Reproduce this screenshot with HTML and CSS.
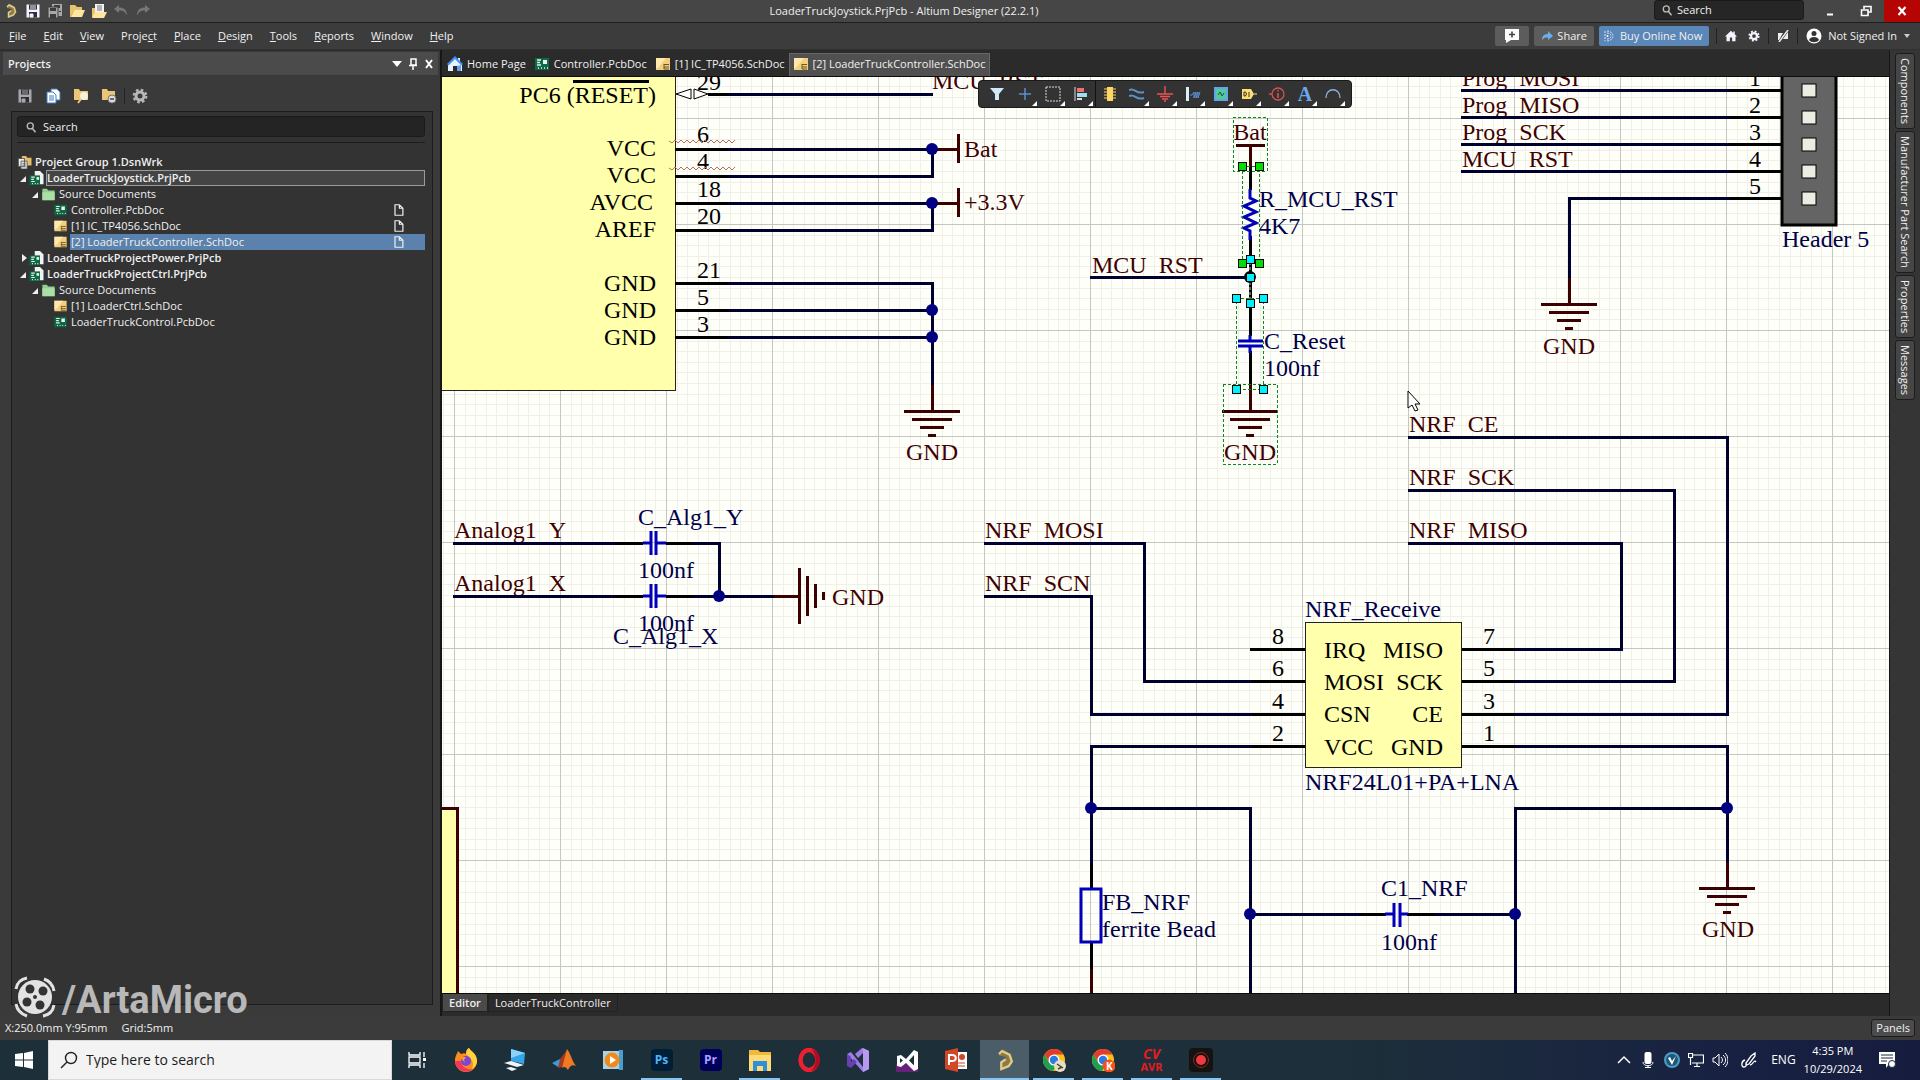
FILE: index.html
```
<!DOCTYPE html>
<html lang="en">
<head>
  <meta charset="UTF-8">
  <meta name="viewport" content="width=device-width, initial-scale=1.0">
  <title>LoaderTruckJoystick.PrjPcb - Altium Designer (22.2.1)</title>
  <link rel="stylesheet" href="styles.css">
</head>
<body>
  <!-- shared icons -->
  <svg class="icon-defs" aria-hidden="true">
    <symbol id="i-altium" viewBox="0 0 16 16"><path d="M4 3l3-2 5 3 1.500 5-3 4-5 2V9l3-1.500V6L4 5z" fill="#8d7a45"/><path d="M4 4l2-2 5 2.500 1.500 4.500-2 3-5 2V9.500l3-2" fill="none" stroke="#e2cd8a" stroke-width="1.500"/></symbol>
    <symbol id="i-save" viewBox="0 0 16 16"><path d="M1.500 1.500h13v13h-13z" fill="currentColor"/><path d="M4 1.500h8v5H4zM4 9h8v5.500H4z" fill="#2d2d38"/><path d="M5 3h6M5 5h6M5 11h3v3H5z" stroke="currentColor" fill="currentColor"/></symbol>
    <symbol id="i-saveall" viewBox="0 0 16 16"><path d="M5 1h10v12H5z" fill="currentColor"/><path d="M7 2h6v3H7zM12 8h2v1h-2z" fill="#3c3c3c"/><path d="M1 4h10v11H1z" fill="currentColor" stroke="#3c3c3c"/><path d="M3 5h6v3H3zM3 11h6v4H3z" fill="#3c3c3c"/></symbol>
    <symbol id="i-open" viewBox="0 0 16 16"><path d="M1 2h5l2 2h5v3H5l-3 7H1z" fill="#e9c46a"/><path d="M5 7h11l-3 7H2z" fill="#ffe6a0"/></symbol>
    <symbol id="i-openprj" viewBox="0 0 16 16"><path d="M4 1h9v9H4z" fill="#f4f4f4"/><path d="M6 3h5M6 5h5M6 7h5" stroke="#777"/><path d="M1 5h3v9H1z" fill="#e9c46a"/><path d="M4 9h12l-3 6H1z" fill="#ffe6a0"/></symbol>
    <symbol id="i-undo" viewBox="0 0 16 16"><path d="M6 2L1 6l5 4V7.500c4-.5 6 1 8 5C14 7 11 4.500 6 4.500z" fill="#777"/></symbol>
    <symbol id="i-redo" viewBox="0 0 16 16"><path d="M10 2l5 4-5 4V7.500c-4-.5-6 1-8 5C2 7 5 4.500 10 4.500z" fill="#777"/></symbol>
    <symbol id="i-search" viewBox="0 0 16 16"><circle cx="7" cy="6.500" r="4" fill="none" stroke="#bbb" stroke-width="1.800"/><path d="M10 10l4 5" stroke="#bbb" stroke-width="2"/></symbol>
    <symbol id="i-gear" viewBox="0 0 16 16"><circle cx="8" cy="8" r="4" fill="none" stroke="currentColor" stroke-width="3"/><circle cx="8" cy="8" r="6.300" fill="none" stroke="currentColor" stroke-width="2.200" stroke-dasharray="2.600 2.350"/></symbol>
    <symbol id="i-pcb" viewBox="0 0 16 16"><path d="M1 2h14v12H1z" fill="#0c6b46"/><path d="M9 4h4v4H9z" fill="#eee"/><path d="M3 4h4M3 6.500h3M3 9h4M4 12h1M7 12h1M10 12h1M13 12h1" stroke="#e8f5e8" stroke-width="1.400"/></symbol>
    <symbol id="i-sch" viewBox="0 0 16 16"><path d="M1 2h14v12H1z" fill="#f3cf7c"/><path d="M1 2h10l-8 10H1z" fill="#ffe7ae"/><path d="M9 8.500h5M9 11h5M9 8v5h5" stroke="#6b5523" fill="none"/></symbol>
    <symbol id="i-prj" viewBox="0 0 16 16"><path d="M6 0h6l4 4v11H6z" fill="#f2f2f2"/><path d="M0 5h12v11H0z" fill="#0c6b46"/><path d="M2 7h4M2 9.500h3M2 12h4M3 14.500h1M6 14.500h1M9 14.500h1" stroke="#e8f5e8" stroke-width="1.300"/><path d="M8 7h3v3H8z" fill="#eee"/></symbol>
    <symbol id="i-group" viewBox="0 0 16 16"><path d="M5 1h5l1 2h5v9H5z" fill="#e6bd69"/><path d="M1 4h7v9H1zM4 7h7v9H4z" fill="#eee" stroke="#555"/><path d="M5.500 9.500h4M5.500 11.500h4M5.500 13.500h4" stroke="#666"/></symbol>
    <symbol id="i-folder" viewBox="0 0 16 16"><path d="M1 2h5l2 2h7v11H1z" fill="#8fd08f"/><path d="M1 6h14v9H1z" fill="#a9e0a4"/></symbol>
    <symbol id="i-file" viewBox="0 0 16 16"><path d="M4 2h5l4 4v8H4zM9 2v4h4" fill="none" stroke="#eee" stroke-width="1.400"/></symbol>
    <symbol id="i-home" viewBox="0 0 16 16"><path d="M8 1L0 8.500h2V15h4.500v-5h3v5H14V8.500h2L13 5.500V2h-2v2z" fill="currentColor"/></symbol>
    <symbol id="i-homeblue" viewBox="0 0 16 16"><path d="M8 1L1 8v7h5v-5h4v5h5V8l-2-2V2h-2v2z" fill="#e8f2ff"/><path d="M8 0L0 8l1.500 1.500L8 3l6.500 6.500L16 8z" fill="#3e8ff0"/><path d="M10 10v5h4V9z" fill="#5aa3f5"/></symbol>
    <symbol id="i-chrome" viewBox="0 0 24 24"><circle cx="12" cy="12" r="11" fill="#fbc116"/><path d="M2.500 6.500A11 11 0 0 1 21.500 6.500H12L7.500 14.500z" fill="#e33b2e"/><path d="M2.500 6.500A11 11 0 0 0 11 23l5-8.500H7.200z" fill="#1fa050"/><circle cx="12" cy="12" r="5.500" fill="#fff"/><circle cx="12" cy="12" r="4.200" fill="#2c7be5"/></symbol>
  </svg>

  <header class="titlebar">
    <div class="quick-access">
      <svg class="icon"><use href="#i-altium"/></svg>
      <svg class="icon white"><use href="#i-save"/></svg>
      <svg class="icon grey"><use href="#i-saveall"/></svg>
      <svg class="icon"><use href="#i-open"/></svg>
      <svg class="icon"><use href="#i-openprj"/></svg>
      <svg class="icon"><use href="#i-undo"/></svg>
      <svg class="icon"><use href="#i-redo"/></svg>
    </div>
    <div class="window-title">LoaderTruckJoystick.PrjPcb - Altium Designer (22.2.1)</div>
    <div class="window-controls">
      <label class="title-search"><svg class="icon small"><use href="#i-search"/></svg><input type="text" placeholder="Search" aria-label="Search"></label>
      <button class="win-btn" aria-label="Minimize"><svg class="icon small" viewBox="0 0 12 12"><path d="M3 9.500h6" stroke="#fff" stroke-width="2"/></svg></button>
      <button class="win-btn" aria-label="Restore"><svg class="icon small" viewBox="0 0 12 12"><path d="M4 4V1.500h7V7H8.500M1.500 5h6.500v5.500H1.500z" fill="none" stroke="#fff" stroke-width="1.600"/></svg></button>
      <button class="win-btn close" aria-label="Close"><svg class="icon small" viewBox="0 0 12 12"><path d="M2.500 2l7 8M9.500 2l-7 8" stroke="#fff" stroke-width="2.200"/></svg></button>
    </div>
  </header>

  <nav class="menubar">
    <div class="menus">
      <button><u>F</u>ile</button>
      <button><u>E</u>dit</button>
      <button><u>V</u>iew</button>
      <button>Proje<u>c</u>t</button>
      <button><u>P</u>lace</button>
      <button><u>D</u>esign</button>
      <button><u>T</u>ools</button>
      <button><u>R</u>eports</button>
      <button><u>W</u>indow</button>
      <button><u>H</u>elp</button>
    </div>
    <div class="account">
      <button class="tool comment" aria-label="Comment"><svg class="icon" viewBox="0 0 16 16"><path d="M1 1h14v11H7l-5 3v-3H1z" fill="#fff"/><path d="M8 3.500v6M5 6.500h6" stroke="#444" stroke-width="1.600"/></svg></button>
      <button class="tool share"><svg class="icon small" viewBox="0 0 12 12"><path d="M7 1l5 5-5 4V7.500H4L1 10c0-4 2-6 6-6z" fill="#6aaeea"/></svg>Share</button>
      <button class="tool buy"><svg class="icon small" viewBox="0 0 12 12"><path d="M2 1v10M4 1c3 0 6 2 6 5s-3 5-6 5M4 3c2 0 4 1 4 3s-2 3-4 3" fill="none" stroke="#d7e6f5" stroke-dasharray="2 1"/><circle cx="4.500" cy="6" r="1" fill="#fff"/></svg>Buy Online Now</button>
      <span class="divider"></span>
      <button class="flat" aria-label="Home"><svg class="icon small white"><use href="#i-home"/></svg></button>
      <button class="flat" aria-label="Settings"><svg class="icon small white"><use href="#i-gear"/></svg></button>
      <span class="divider"></span>
      <button class="flat" aria-label="Notifications"><svg class="icon small" viewBox="0 0 12 12"><path d="M1 3l5 0-4 7H1zM11 2v7H6z" fill="#eee"/><path d="M11 0L2 12" stroke="#eee" stroke-width="1.500"/></svg></button>
      <span class="divider"></span>
      <button class="flat user"><svg class="icon" viewBox="0 0 16 16"><circle cx="8" cy="8" r="7.500" fill="#fff"/><circle cx="8" cy="5.500" r="2.500" fill="#333"/><path d="M3 12c1-4 9-4 10 0-2 3-8 3-10 0z" fill="#333"/></svg>Not Signed In<svg class="caret" viewBox="0 0 8 8"><path d="M1 2h6L4 6z" fill="#ccc"/></svg></button>
    </div>
  </nav>

  <main class="workspace">
    <aside class="projects">
      <div class="panel-head">
        <h2>Projects</h2>
        <svg class="icon small" viewBox="0 0 12 12"><path d="M1 3h10L6 9z" fill="#fff"/></svg>
        <svg class="icon small" viewBox="0 0 12 12"><path d="M4 1h5v6H4zM2 7.500h8M6 8v4" stroke="#fff" stroke-width="1.500" fill="none"/></svg>
        <svg class="icon small" viewBox="0 0 12 12"><path d="M3 2l6 8M9 2l-6 8" stroke="#fff" stroke-width="2"/></svg>
      </div>
      <div class="panel-tools">
        <button aria-label="Save"><svg class="icon grey"><use href="#i-save"/></svg></button>
        <button aria-label="Compile"><svg class="icon" viewBox="0 0 16 16"><path d="M6 1h6l3 3v8H6z" fill="#fff" stroke="#3c7cc4"/><path d="M2 4h6l3 3v8H2z" fill="#fff" stroke="#3c7cc4"/><path d="M4 8h5M4 10h5M4 12h5" stroke="#3c7cc4"/></svg></button>
        <button aria-label="Explore"><svg class="icon" viewBox="0 0 16 16"><path d="M1 1h5l1 2h8v9H1z" fill="#eec477"/><circle cx="11" cy="8" r="4" fill="#f6f2e0"/><path d="M8 11l-3 4" stroke="#eec477" stroke-width="2"/></svg></button>
        <button aria-label="Open project"><svg class="icon" viewBox="0 0 16 16"><path d="M1 1h5l1 2h7v9H1z" fill="#eec477"/><circle cx="11" cy="11" r="4" fill="#ddd" stroke="#777"/><path d="M9 11h4" stroke="#444" stroke-width="1.500"/></svg></button>
        <span class="divider"></span>
        <button aria-label="Options"><svg class="icon gear"><use href="#i-gear"/></svg></button>
      </div>
      <div class="panel-body">
        <label class="panel-search"><svg class="icon small"><use href="#i-search"/></svg><input type="text" placeholder="Search" aria-label="Search projects"></label>
        <ul class="tree">
          <li class="root"><svg class="icon"><use href="#i-group"/></svg><span class="name bold">Project Group 1.DsnWrk</span></li>
          <li class="level1 current"><i class="arrow open"></i><svg class="icon"><use href="#i-prj"/></svg><span class="name bold">LoaderTruckJoystick.PrjPcb</span></li>
          <li class="level2"><i class="arrow open"></i><svg class="icon"><use href="#i-folder"/></svg><span class="name">Source Documents</span></li>
          <li class="level3"><svg class="icon"><use href="#i-pcb"/></svg><span class="name">Controller.PcbDoc</span><svg class="icon doc"><use href="#i-file"/></svg></li>
          <li class="level3"><svg class="icon"><use href="#i-sch"/></svg><span class="name">[1] IC_TP4056.SchDoc</span><svg class="icon doc"><use href="#i-file"/></svg></li>
          <li class="level3 selected"><svg class="icon"><use href="#i-sch"/></svg><span class="name">[2] LoaderTruckController.SchDoc</span><svg class="icon doc"><use href="#i-file"/></svg></li>
          <li class="level1"><i class="arrow"></i><svg class="icon"><use href="#i-prj"/></svg><span class="name bold">LoaderTruckProjectPower.PrjPcb</span></li>
          <li class="level1"><i class="arrow open"></i><svg class="icon"><use href="#i-prj"/></svg><span class="name bold">LoaderTruckProjectCtrl.PrjPcb</span></li>
          <li class="level2"><i class="arrow open"></i><svg class="icon"><use href="#i-folder"/></svg><span class="name">Source Documents</span></li>
          <li class="level3"><svg class="icon"><use href="#i-sch"/></svg><span class="name">[1] LoaderCtrl.SchDoc</span></li>
          <li class="level3"><svg class="icon"><use href="#i-pcb"/></svg><span class="name">LoaderTruckControl.PcbDoc</span></li>
        </ul>
      </div>
      <div class="watermark">
        <svg viewBox="0 0 42 42"><circle cx="21" cy="21" r="17" fill="#e2e2e2"/><path d="M13 2C7 3 3 7 2 13M40 15c-1-6-4-10-10-12M29 40c6-1 10-5 11-11M2 28c1 6 5 10 11 12" fill="none" stroke="#e2e2e2" stroke-width="3"/><g fill="#333"><circle cx="16" cy="13" r="4.500"/><circle cx="29" cy="15" r="4.500"/><circle cx="13" cy="26" r="4.500"/><circle cx="26" cy="29" r="4.500"/><circle cx="21" cy="21" r="2"/></g></svg>
        <span>/ArtaMicro</span>
      </div>
    </aside>

    <section class="editor">
      <div class="doc-tabs">
        <button><svg class="icon"><use href="#i-homeblue"/></svg>Home Page</button>
        <button><svg class="icon"><use href="#i-pcb"/></svg>Controller.PcbDoc</button>
        <button><svg class="icon"><use href="#i-sch"/></svg>[1] IC_TP4056.SchDoc</button>
        <button class="active"><svg class="icon"><use href="#i-sch"/></svg>[2] LoaderTruckController.SchDoc</button>
      </div>

      <div class="canvas">
        <svg class="sheet">
          <defs>
            <pattern id="grid" x="454" y="118" width="106" height="106" patternUnits="userSpaceOnUse">
              <path class="minor" d="M11 0v106M21 0v106M32 0v106M42 0v106M53 0v106M64 0v106M74 0v106M85 0v106M95 0v106M0 11h106M0 21h106M0 32h106M0 42h106M0 53h106M0 64h106M0 74h106M0 85h106M0 95h106"/>
              <path class="major" d="M0 0v106M0 0h106"/>
            </pattern>
            <g id="gnd">
              <path class="power" d="M0-26V0M-28 0h56M-20 8h40M-12 16h24M-4 24h8"/>
            </g>
            <rect id="handle" x="-4" y="-4" width="8" height="8"/>
          </defs>
          <g transform="translate(-442 -77)">
            <rect x="442" y="77" width="100%" height="100%" fill="url(#grid)"/>

            <!-- microcontroller -->
            <rect class="body" x="430" y="60" width="245" height="330"/>
            <path class="body-edge" d="M430 808h27v200h-27z"/>
            <g class="pin end">
              <text x="656" y="103">PC6 (RESET)</text>
              <text x="656" y="156">VCC</text>
              <text x="656" y="183">VCC</text>
              <text x="653" y="210">AVCC</text>
              <text x="656" y="237">AREF</text>
              <text x="656" y="291">GND</text>
              <text x="656" y="318">GND</text>
              <text x="656" y="345">GND</text>
            </g>
            <path class="lead" d="M573 81h76"/>
            <g class="pin">
              <text x="697" y="90">29</text>
              <text x="697" y="142">6</text>
              <text x="697" y="169">4</text>
              <text x="697" y="197">18</text>
              <text x="697" y="224">20</text>
              <text x="697" y="278">21</text>
              <text x="697" y="305">5</text>
              <text x="697" y="332">3</text>
            </g>
            <path class="squiggle" d="M669 141l3 2 3-3 3 3 3-3 3 3 3-3 3 3 3-3 3 3 3-3 3 3 3-3 3 3 3-3 3 3 3-3 3 3 3-3 3 3 3-3 3 3 3-3M669 168l3 2 3-3 3 3 3-3 3 3 3-3 3 3 3-3 3 3 3-3 3 3 3-3 3 3 3-3 3 3 3-3 3 3 3-3 3 3 3-3 3 3 3-3"/>
            <text class="net" x="932" y="89">MCU&nbsp;&nbsp;RST</text>
            <path class="wire" d="M727 94h206M727 149h205v27H727M727 203h205v27H727M727 283h205v102M727 310h205M727 337h205"/>
            <path class="lead" d="M708 94h20M675 149h53M675 176h53M675 203h53M675 230h53M675 283h53M675 310h53M675 337h53"/>
            <path class="arrows" d="M676 94l15-5v10zM694 89v10l14-5z"/>
            <path class="power" d="M932 149h26M958 134v29M932 203h26M958 188v29"/>
            <text class="net" x="964" y="157">Bat</text>
            <text class="net" x="964" y="210">+3.3V</text>
            <use href="#gnd" x="932" y="411"/>
            <text class="net mid" x="932" y="460">GND</text>
            <g class="junction"><circle cx="932" cy="149" r="6"/><circle cx="932" cy="203" r="6"/><circle cx="932" cy="310" r="6"/><circle cx="932" cy="337" r="6"/></g>

            <!-- reset circuit -->
            <text class="net mid" x="1250" y="140">Bat</text>
            <path class="power" d="M1236 145h29M1250 145v22"/>
            <path class="lead" d="M1250 167v23M1250 236v100M1250 351v38"/>
            <path class="part" d="M1250 189v9l6 3-12 5 12 6-12 5 12 6-12 5 6 3v9"/>
            <path class="part" d="M1250 335v5M1238 341h25M1238 346h25M1250 347v6"/>
            <text class="net" x="1092" y="273">MCU&nbsp;&nbsp;RST</text>
            <path class="wire" d="M1090 277h160"/>
            <text class="ref" x="1259" y="207">R_MCU_RST</text>
            <text class="ref" x="1259" y="234">4K7</text>
            <text class="ref" x="1264" y="349">C_Reset</text>
            <text class="ref" x="1264" y="376">100nf</text>
            <use href="#gnd" x="1250" y="411"/>
            <text class="net mid" x="1250" y="460">GND</text>
            <path class="select" d="M1233 117h34v54h-34zM1223 384h54v80h-54zM1242 166h17v97h-17zM1236 298h27v91h-27z"/>
            <path class="select-wire" d="M1250 262v38"/>
            <circle class="ring" cx="1250" cy="277" r="5"/>
            <g class="handle-green">
              <use href="#handle" x="1242" y="166"/><use href="#handle" x="1259" y="166"/>
              <use href="#handle" x="1242" y="263"/><use href="#handle" x="1259" y="263"/>
            </g>
            <g class="handle-cyan">
              <use href="#handle" x="1250" y="259"/><use href="#handle" x="1250" y="277"/><use href="#handle" x="1250" y="303"/>
              <use href="#handle" x="1236" y="298"/><use href="#handle" x="1263" y="298"/>
              <use href="#handle" x="1236" y="389"/><use href="#handle" x="1263" y="389"/>
            </g>

            <!-- programming header -->
            <g class="net">
              <text x="1462" y="86">Prog&nbsp;&nbsp;MOSI</text>
              <text x="1462" y="113">Prog&nbsp;&nbsp;MISO</text>
              <text x="1462" y="140">Prog&nbsp;&nbsp;SCK</text>
              <text x="1462" y="167">MCU&nbsp;&nbsp;RST</text>
            </g>
            <g class="pin">
              <text x="1749" y="86">1</text>
              <text x="1749" y="113">2</text>
              <text x="1749" y="140">3</text>
              <text x="1749" y="167">4</text>
              <text x="1749" y="194">5</text>
            </g>
            <path class="wire" d="M1461 90h270M1461 117h270M1461 144h270M1461 171h270M1730 198h-161v83"/>
            <path class="lead" d="M1730 90h51M1730 117h51M1730 144h51M1730 171h51M1730 198h51"/>
            <rect class="header" x="1782" y="60" width="54" height="165"/>
            <g class="pad"><rect x="1802" y="84" width="14" height="13"/><rect x="1802" y="111" width="14" height="13"/><rect x="1802" y="138" width="14" height="13"/><rect x="1802" y="165" width="14" height="13"/><rect x="1802" y="192" width="14" height="13"/></g>
            <text class="ref" x="1782" y="247">Header 5</text>
            <use href="#gnd" x="1569" y="304"/>
            <text class="net mid" x="1569" y="354">GND</text>

            <!-- analog inputs -->
            <text class="net" x="454" y="538">Analog1&nbsp;&nbsp;Y</text>
            <text class="net" x="454" y="591">Analog1&nbsp;&nbsp;X</text>
            <path class="wire" d="M453 543h163M453 596h163M692 543h27v53M692 596h83"/>
            <path class="lead" d="M615 543h28M666 543h27M615 596h28M666 596h27"/>
            <path class="part" d="M643 543h8M651 531v24M656 531v24M657 543h9M643 596h8M651 584v24M656 584v24M657 596h9"/>
            <path class="power" d="M774 596h25M799 568v56M807 576v40M815 584v24M823 592v8"/>
            <circle class="junction" cx="719" cy="596" r="6"/>
            <text class="net" x="832" y="605">GND</text>
            <text class="ref" x="638" y="525">C_Alg1_Y</text>
            <text class="ref" x="638" y="578">100nf</text>
            <text class="ref" x="638" y="631">100nf</text>
            <text class="ref" x="613" y="644">C_Alg1_X</text>

            <!-- radio module -->
            <g class="net">
              <text x="985" y="538">NRF&nbsp;&nbsp;MOSI</text>
              <text x="985" y="591">NRF&nbsp;&nbsp;SCN</text>
              <text x="1409" y="432">NRF&nbsp;&nbsp;CE</text>
              <text x="1409" y="485">NRF&nbsp;&nbsp;SCK</text>
              <text x="1409" y="538">NRF&nbsp;&nbsp;MISO</text>
            </g>
            <path class="wire" d="M984 543h160v138h109M984 596h107v118h162M1408 437h319v277h-213M1408 490h266v191h-160M1408 543h213v106h-107M1253 746h-162v117M1091 808h159v190M1514 746h213v117M1727 808h-212v190M1250 914h109M1433 914h82"/>
            <rect class="body" x="1305" y="622" width="156" height="145"/>
            <path class="lead" d="M1250 649h55M1252 681h53M1252 714h53M1252 746h53M1462 649h53M1462 681h53M1462 714h53M1462 746h53"/>
            <g class="pin">
              <text x="1272" y="644">8</text>
              <text x="1272" y="676">6</text>
              <text x="1272" y="709">4</text>
              <text x="1272" y="741">2</text>
              <text x="1483" y="644">7</text>
              <text x="1483" y="676">5</text>
              <text x="1483" y="709">3</text>
              <text x="1483" y="741">1</text>
              <text x="1324" y="658">IRQ</text>
              <text x="1324" y="690">MOSI</text>
              <text x="1324" y="722">CSN</text>
              <text x="1324" y="755">VCC</text>
            </g>
            <g class="pin end">
              <text x="1443" y="658">MISO</text>
              <text x="1443" y="690">SCK</text>
              <text x="1443" y="722">CE</text>
              <text x="1443" y="755">GND</text>
            </g>
            <text class="ref" x="1305" y="617">NRF_Receive</text>
            <text class="ref" x="1305" y="790">NRF24L01+PA+LNA</text>

            <!-- supply filter -->
            <path class="lead" d="M1091 863v26M1091 943v26M1359 914h27M1407 914h27"/>
            <path class="power" d="M1091 969v30"/>
            <path class="part" d="M1081 889h20v53h-20zM1385 914h9M1394 903v24M1400 903v24M1400 914h8"/>
            <g class="junction"><circle cx="1091" cy="808" r="6"/><circle cx="1727" cy="808" r="6"/><circle cx="1250" cy="914" r="6"/><circle cx="1515" cy="914" r="6"/></g>
            <text class="ref" x="1102" y="910">FB_NRF</text>
            <text class="ref" x="1102" y="937">ferrite Bead</text>
            <text class="ref" x="1381" y="896">C1_NRF</text>
            <text class="ref" x="1381" y="950">100nf</text>
            <use href="#gnd" x="1727" y="888"/>
            <text class="net mid" x="1728" y="937">GND</text>

            <path d="M1408 391v17l4-3 3 6 3-1-3-6h5z" fill="#fff" stroke="#000"/>
          </g>
        </svg>

        <div class="active-bar">
          <button aria-label="Filter"><svg class="icon" viewBox="0 0 16 16"><path d="M1 2h14l-5 6v6H6V8z" fill="#cfeaf7"/></svg></button>
          <button class="more" aria-label="Move"><svg class="icon" viewBox="0 0 16 16"><path d="M8 2v12M2 8h12" stroke="#5b8fd0" stroke-width="1.500"/></svg></button>
          <button class="more" aria-label="Select"><svg class="icon" viewBox="0 0 16 16"><path d="M1 1h14v14H1z" fill="none" stroke="#ddd" stroke-dasharray="2 1"/></svg></button>
          <button class="more" aria-label="Align"><svg class="icon" viewBox="0 0 16 16"><path d="M2 1v14" stroke="#ddd"/><path d="M4 2h7v4H4z" fill="#f07070"/><path d="M4 7h10v4H4z" fill="#9fdcf0"/><path d="M4 13h5" stroke="#ddd" stroke-width="2"/></svg></button>
          <button class="split" aria-label="Part"><svg class="icon" viewBox="0 0 16 16"><path d="M5 1h6v14H5z" fill="#ffd765"/><path d="M2 3h3M2 6h3M2 9h3M2 12h3M11 3h3M11 6h3M11 9h3M11 12h3" stroke="#ffd765"/></svg></button>
          <button class="more" aria-label="Wire"><svg class="icon" viewBox="0 0 16 16"><path d="M0 4c6-3 7 5 15 2M0 10c6-3 7 5 15 2" fill="none" stroke="#5b93cc" stroke-width="2"/></svg></button>
          <button class="more" aria-label="Power port"><svg class="icon" viewBox="0 0 16 16"><path d="M8 0v8M0 8h16M3 10.500h10M5 13h6M7 15h2" stroke="#f05050" stroke-width="1.400"/></svg></button>
          <button class="more" aria-label="Harness"><svg class="icon" viewBox="0 0 16 16"><path d="M1 1h3v14H1z" fill="#d8eef8"/><path d="M5 9h2l2-3v6l2-6v6l2-6v6l2-6" stroke="#5f8fd8" fill="none"/></svg></button>
          <button class="more" aria-label="Sheet symbol"><svg class="icon" viewBox="0 0 16 16"><path d="M2 2h12v12H2z" fill="#56c8a0" stroke="#5fa8e8" stroke-width="2"/><path d="M5 9l2-3 2 4 2-3" stroke="#185a48" fill="none"/></svg></button>
          <button class="more" aria-label="Port"><svg class="icon" viewBox="0 0 16 16"><path d="M1 3h9l3 5-3 5H1zM13 7.500h3v1h-3z" fill="#ffdf72"/><path d="M3 6v4h1.500l1-2-1-2zM8 6v5" stroke="#333" fill="none"/></svg></button>
          <button class="more" aria-label="Directive"><svg class="icon" viewBox="0 0 16 16"><circle cx="9" cy="8" r="6" fill="none" stroke="#d85050" stroke-width="1.300"/><path d="M0 8h3M9 7v5M9 4v1.500" stroke="#d85050" stroke-width="1.600"/></svg></button>
          <button class="more letter" aria-label="Text">A</button>
          <button class="more" aria-label="Arc"><svg class="icon" viewBox="0 0 16 16"><path d="M1 12C1 1 15 1 15 12" fill="none" stroke="#8fb0d8" stroke-width="1.300"/></svg></button>
        </div>
      </div>

      <div class="view-tabs">
        <button class="active">Editor</button>
        <button>LoaderTruckController</button>
      </div>
    </section>

    <aside class="side-tabs">
      <button>Components</button>
      <button>Manufacturer Part Search</button>
      <button>Properties</button>
      <button>Messages</button>
    </aside>
  </main>

  <footer class="statusbar">
    <span class="coords">X:250.0mm Y:95mm</span>
    <span class="snap">Grid:5mm</span>
    <button class="panels">Panels</button>
  </footer>

  <div class="taskbar">
    <button class="start" aria-label="Start"><svg viewBox="0 0 18 18"><path d="M0 3l8-1v6.500H0zM9 2l9-2v8.500H9zM0 9.500h8V16l-8-1zM9 9.500h9V18l-9-2z" fill="#fff"/></svg></button>
    <label class="task-search"><svg viewBox="0 0 18 18"><circle cx="11" cy="7" r="5.500" fill="none" stroke="#222" stroke-width="1.400"/><path d="M7 11l-6 6" stroke="#222" stroke-width="1.500"/></svg><input type="text" placeholder="Type here to search" aria-label="Type here to search"></label>
    <div class="apps">
      <button aria-label="Task view"><svg viewBox="0 0 24 24"><path d="M4 4v3h11V4M4 20v-3h11v3M4 9h11v6H4zM19 4v5M19 15v5" fill="none" stroke="#fff" stroke-width="1.300"/><path d="M18 10h3v3h-3z" fill="#fff"/></svg></button>
      <button aria-label="Firefox"><svg viewBox="0 0 24 24"><path d="M15 0c1 3 8 5 8 13A11 11 0 0 1 1 13C1 8 3 6 4 3l3 3c3-1 4-1 5 0 0-3 1-5 3-6z" fill="#ff8a1f"/><path d="M15 0c1 3 8 5 8 13 0 4-3 7-5 8 3-7-1-11-6-15 0-3 1-5 3-6z" fill="#ffd43a"/><path d="M1 13a11 11 0 0 0 18 8c-5 1-11-1-12-8z" fill="#f5355a"/><circle cx="12" cy="13" r="5" fill="#7a45d8"/><path d="M6 9l6 0-2 3 1 3z" fill="#ff9a2a"/></svg></button>
      <button aria-label="Computer"><svg viewBox="0 0 24 24"><path d="M8 1l14 4-1 11-13-3z" fill="#35a5ea"/><path d="M8 1l14 4-14 5z" fill="#8bd2fa"/><path d="M1 15l7-2 13 4-7 2zM3 20l5-1 6 2-5 2z" fill="#eef4f8"/></svg></button>
      <button aria-label="MATLAB"><svg viewBox="0 0 24 24"><path d="M0 15l8-4 3 3-5 5z" fill="#3f9bd8"/><path d="M8 11l7-9-4 17-5 1z" fill="#a33c1e"/><path d="M15 1c3 3 5 12 9 17-4-2-6 0-8 4-2-3-4-4-6-2z" fill="#f07a24"/></svg></button>
      <button aria-label="Media Player"><svg viewBox="0 0 24 24"><path d="M2 3h16v18H2z" fill="#a8d4ea"/><path d="M18 2h4v20h-4z" fill="#4b9dcc"/><circle cx="11" cy="12" r="7.500" fill="#f18a1c"/><path d="M9 8l6 4-6 4z" fill="#fff"/></svg></button>
      <button class="open" aria-label="Photoshop"><span class="tile ps">Ps</span></button>
      <button aria-label="Premiere"><span class="tile pr">Pr</span></button>
      <button class="open" aria-label="File Explorer"><svg viewBox="0 0 24 24"><path d="M1 2h9l2 2h11v19H1z" fill="#f0b93a"/><path d="M1 7h22v16H1z" fill="#ffdb78"/><path d="M5 13h14v10h-4v-5H9v5H5z" fill="#2f8fd8"/></svg></button>
      <button aria-label="Opera"><svg viewBox="0 0 24 24"><ellipse cx="12" cy="12" rx="8.500" ry="10" fill="none" stroke="#ee2030" stroke-width="4.500"/><path d="M14 1c12 2 12 20 0 22 6-5 6-17 0-22z" fill="#b00e20"/></svg></button>
      <button aria-label="Visual Studio"><svg viewBox="0 0 24 24"><path d="M1 6l4-2 12 15V5l-5 5-3-4 7-6 7 3v18l-6 3z" fill="#9d7be6"/><path d="M17 0l6 3v18l-6 3z" fill="#b79af0"/><path d="M1 6v12l4 2 6-6-3-3-3 3V9z" fill="#6a3fb0"/></svg></button>
      <button aria-label="Visual Studio 2012"><svg viewBox="0 0 24 24"><path d="M1 16h22v8H1z" fill="#68217a"/><path d="M2 8l4-1 5 4 8-9 4 2v17l-4 2-8-8-5 4-4-1zM5 10v5l3-2.500zM19 7l-5 5.500 5 5z" fill="#fff" fill-rule="evenodd"/></svg></button>
      <button aria-label="PowerPoint"><svg viewBox="0 0 24 24"><path d="M12 4h11v17H12z" fill="#fff"/><circle cx="18" cy="9" r="3" fill="#d24726"/><path d="M14 15h7M14 18h7" stroke="#d24726"/><path d="M1 3l13-3v24L1 21z" fill="#d24726"/><path d="M5 17V7h3c5 0 5 6 0 6H6" fill="none" stroke="#fff" stroke-width="2"/></svg></button>
      <button class="open current" aria-label="Altium Designer"><svg viewBox="0 0 16 16"><use href="#i-altium"/></svg></button>
      <button class="open" aria-label="Chrome"><svg viewBox="0 0 24 24"><use href="#i-chrome"/><circle cx="18" cy="18" r="6" fill="#e9dfc0"/><path d="M15 16l6 4M16 21l4-2" stroke="#444" stroke-width="1.500"/></svg></button>
      <button class="open" aria-label="Chrome profile K"><svg viewBox="0 0 24 24"><use href="#i-chrome"/><circle cx="18" cy="18" r="6.500" fill="#f4511e"/></svg><b class="badge">K</b></button>
      <button class="open" aria-label="CodeVisionAVR"><span class="cvavr"><i>CV</i>AVR</span></button>
      <button class="open" aria-label="Recorder"><svg viewBox="0 0 24 24"><rect width="24" height="24" rx="4" fill="#151212"/><circle cx="12" cy="12" r="7.500" fill="none" stroke="#8c2424"/><circle cx="12" cy="12" r="5" fill="#f2393f"/></svg></button>
    </div>
    <div class="tray">
      <svg viewBox="0 0 16 16"><path d="M2 11l6-6 6 6" fill="none" stroke="#fff" stroke-width="1.500"/></svg>
      <svg viewBox="0 0 16 16"><rect x="4.500" y="0" width="7" height="12" rx="2" fill="#fff"/><path d="M3 10c0 5 10 5 10 0M8 13v3M5 15.500h6" fill="none" stroke="#fff"/></svg>
      <svg viewBox="0 0 16 16"><circle cx="8" cy="8" r="8" fill="#4d9cc4"/><circle cx="8" cy="8" r="6" fill="#1d5878"/><path d="M4 6l2-1 2 4 4-5-4 9z" fill="#fff"/></svg>
      <svg viewBox="0 0 16 16"><path d="M4 3h11.500v8H4M9 11v3M6 14.500h6M.5 1.500h4v4h-4zM2.500 6v7" fill="none" stroke="#fff" stroke-width="1.200"/></svg>
      <svg viewBox="0 0 16 16"><path d="M1 6h2l4-4v12l-4-4H1zM9 5c2 2 2 4 0 6M11 3c3.500 3 3.500 7 0 10M13 1c4 4 4 10 0 14" fill="none" stroke="#fff"/></svg>
      <svg class="pen" viewBox="0 0 16 16"><path d="M14 1l-4 3-5 7v2l3-1 6-8zM4 8c-4 1-4 7-1 7 2 0 3-2 2-4M9 13c3 0 2-3 5-4l1 1" fill="none" stroke="#fff" stroke-width="1.300"/></svg>
      <span class="lang">ENG</span>
      <div class="clock"><time>4:35 PM</time><time>10/29/2024</time></div>
      <svg class="notice" viewBox="0 0 18 18"><path d="M1 1h16v12h-6l-3 4v-4H1z" fill="#fff"/><path d="M3 4h12M3 7h12M3 10h6" stroke="#1b2440"/><circle cx="14" cy="13" r="3.500" fill="#fff" stroke="#1b2440"/></svg>
    </div>
  </div>
</body>
</html>
```
FILE: styles.css
```
* {
  box-sizing: border-box;
}

body {
  margin: 0;
  height: 100vh;
  display: flex;
  flex-direction: column;
  overflow: hidden;
  background: #2b2b2b;
  color: #f0f0f0;
  font: 11px/16px "Open Sans", "Noto Sans", sans-serif;
}

button, input {
  font: inherit;
  color: inherit;
  border: 0;
  padding: 0;
  margin: 0;
  background: none;
}

button {
  display: flex;
  align-items: center;
  white-space: nowrap;
}

input {
  outline: none;
  min-width: 0;
  flex: 1;
}

input::placeholder {
  color: inherit;
  opacity: 1;
}

svg {
  display: block;
  flex: none;
}

.icon-defs {
  position: absolute;
  width: 0;
  height: 0;
}

.icon {
  width: 16px;
  height: 16px;
}

.icon.small {
  width: 12px;
  height: 12px;
}

.white { color: #f4f4ff; }
.grey { color: #a8a8a8; }

.divider {
  width: 1px;
  height: 16px;
  background: #222;
}

/* title bar */
.titlebar {
  height: 23px;
  display: flex;
  align-items: center;
  background: #464646;
  border-bottom: 1px solid #1e1e1e;
}

.quick-access {
  display: flex;
  gap: 6px;
  padding: 0 3px;
}

.window-title {
  flex: 1;
  text-align: center;
}

.window-controls {
  display: flex;
  justify-content: flex-end;
  align-self: stretch;
}

.title-search {
  width: 150px;
  height: 20px;
  margin-right: 8px;
  padding: 0 6px;
  display: flex;
  align-items: center;
  gap: 4px;
  background: #262626;
  border: 1px solid #1a1a1a;
  border-radius: 3px;
}

.win-btn {
  width: 36px;
  height: 22px;
  justify-content: center;
}

.win-btn.close {
  background: #b40404;
}

/* menu bar */
.menubar {
  height: 27px;
  display: flex;
  justify-content: space-between;
  align-items: center;
  background: #3c3c3c;
  border-bottom: 1px solid #303030;
}

.menus {
  display: flex;
  gap: 17px;
  padding-left: 9px;
}

.account {
  display: flex;
  align-items: center;
  gap: 5px;
  padding-right: 6px;
}

.tool {
  height: 20px;
  padding: 0 7px;
  gap: 4px;
  background: #5c5c5c;
  border-radius: 2px;
}

.tool.comment {
  padding: 0 9px;
}

.tool.buy {
  background: #5a86b8;
  padding: 0 7px 0 4px;
  gap: 5px;
  margin-right: 2px;
}

.flat {
  padding: 0 3px;
}

.user {
  gap: 6px;
}

.caret {
  width: 8px;
  height: 8px;
}

/* workspace */
.workspace {
  flex: 1;
  min-height: 0;
  display: flex;
}

.projects {
  position: relative;
  width: 440px;
  padding: 1px 2px 11px 3px;
  display: flex;
  flex-direction: column;
  background: #3a3a3a;
  border-top: 1px solid #2c2c2c;
}

.panel-head {
  height: 23px;
  padding: 0 3px 0 5px;
  display: flex;
  align-items: center;
  gap: 4px;
  background: #4b4b4b;
}

.panel-head h2 {
  flex: 1;
  margin: 0;
  font-size: 11px;
  font-weight: 600;
}

.panel-tools {
  height: 36px;
  padding: 6px 14px 0;
  display: flex;
  align-items: center;
  gap: 12px;
}

.panel-tools .divider {
  margin: 0 -5px;
}

.panel-tools .gear {
  color: #b8b8b8;
}

.panel-body {
  flex: 1;
  margin: 0 5px 0 8px;
  padding: 4px 7px 4px 5px;
  background: #333;
  border: 1px solid #1d1d1d;
}

.panel-search {
  height: 21px;
  padding: 0 7px;
  display: flex;
  align-items: center;
  gap: 6px;
  background: #242424;
  border: 1px solid #1a1a1a;
  border-radius: 3px;
}

.tree {
  margin: 5px 0 0;
  padding: 11px 0 0;
  border-top: 1px solid #1d1d1d;
  list-style: none;
}

.tree li {
  height: 16px;
  display: flex;
  align-items: center;
}

.tree .icon {
  width: 15px;
  height: 14px;
}

.tree .name {
  flex: 1;
  height: 16px;
  margin-left: 2px;
  line-height: 14px;
  border: 1px solid transparent;
}

.bold {
  font-weight: 600;
}

.level1 { padding-left: 3px; }
.level2 { padding-left: 15px; }
.level3 { position: relative; padding-left: 36px; }

.current .name {
  background: #444;
  border-color: #9a9a9a;
}

.selected .name {
  background: #5a82ad;
}

.tree .doc {
  position: absolute;
  right: 19px;
}

.arrow {
  width: 9px;
  height: 16px;
  flex: none;
}

.arrow::before {
  content: "";
  display: block;
  margin: 4px 0 0 2px;
  border: 4px solid transparent;
  border-left: 5px solid #eee;
  border-right: 0;
}

.arrow.open::before {
  margin: 6px 3px 0 0;
  border: 0;
  border-left: 6px solid transparent;
  border-bottom: 6px solid #eee;
}

.watermark {
  position: absolute;
  left: 14px;
  bottom: -12px;
  display: flex;
  align-items: flex-start;
  gap: 6px;
  color: #b8b8b8;
  font: 700 38px/56px Roboto, sans-serif;
}

.watermark svg {
  width: 42px;
  height: 50px;
}

/* editor */
.editor {
  flex: 1;
  min-width: 0;
  display: flex;
  flex-direction: column;
  border-left: 2px solid #161616;
}

.doc-tabs {
  height: 27px;
  padding: 3px 0 0 1px;
  display: flex;
  border-bottom: 1px solid #0c0c0c;
}

.doc-tabs button {
  gap: 4px;
  padding: 0 4px 2px 4px;
}

.doc-tabs button.active {
  background: #505050;
  padding: 0 3px 2px 3px;
  border: 1px solid #666;
  border-bottom: 0;
}

.canvas {
  position: relative;
  flex: 1;
  min-height: 0;
  overflow: hidden;
  background: #fffffa;
}

.sheet {
  width: 100%;
  height: 100%;
  font: 24px "Liberation Serif", serif;
}

.minor, .major {
  fill: none;
  stroke: #f0efe8;
  stroke-width: 1;
  shape-rendering: crispEdges;
}

.major { stroke: #c6c6c4; }

.wire, .lead, .power {
  fill: none;
  stroke: #000030;
  stroke-width: 3;
  shape-rendering: crispEdges;
}

.lead { stroke: #000; }
.power { stroke: #3c0000; }

.part {
  fill: none;
  stroke: #0000b8;
  stroke-width: 3;
}

.body, .body-edge {
  fill: #ffffac;
  stroke: #222;
  shape-rendering: crispEdges;
}

.body-edge {
  stroke: #3c0000;
  stroke-width: 3;
}

.pin { fill: #000; }
.net { fill: #400000; }
.ref { fill: #000048; }
.end { text-anchor: end; }
.mid { text-anchor: middle; }

.arrows {
  fill: #fff;
  stroke: #000;
}

.squiggle {
  fill: none;
  stroke: #b8705c;
}

.junction { fill: #000080; }

.header {
  fill: #646464;
  stroke: #000;
  stroke-width: 3;
}

.pad {
  fill: #ecece2;
  stroke: #000;
}

.select {
  fill: none;
  stroke: #0a8a1a;
  stroke-dasharray: 3 2;
  shape-rendering: crispEdges;
}

.select-wire {
  stroke: #a8d8b0;
  stroke-dasharray: 3 2;
}

.ring {
  fill: #00f0ff;
  stroke: #000;
  stroke-width: 2;
}

.handle-green, .handle-cyan {
  fill: #00e000;
  stroke: #000;
  shape-rendering: crispEdges;
}

.handle-cyan { fill: #00f0ff; }

.active-bar {
  position: absolute;
  top: 3px;
  left: 536px;
  height: 28px;
  padding: 0 4px;
  display: flex;
  background: #333;
  border: 1px solid #1a1a1a;
  border-radius: 4px;
}

.active-bar button {
  position: relative;
  width: 28px;
  justify-content: center;
}

.active-bar .split {
  border-left: 1px solid #111;
}

.active-bar .more::after {
  content: "";
  position: absolute;
  right: 2px;
  bottom: 1px;
  border-left: 5px solid transparent;
  border-bottom: 5px solid #fff;
}

.active-bar .letter {
  color: #6ba8f0;
  font: bold 20px "Liberation Serif", serif;
}

.view-tabs {
  height: 23px;
  display: flex;
  align-items: flex-start;
  border-top: 1px solid #0c0c0c;
}

.view-tabs button {
  height: 18px;
  padding: 0 6px;
  border: 1px solid #222;
  border-top: 0;
}

.view-tabs .active {
  background: #4a4a4a;
  font-weight: 600;
}

/* side tabs */
.side-tabs {
  width: 31px;
  padding: 3px 5px 0 5px;
  display: flex;
  flex-direction: column;
  gap: 2px;
  background: #353535;
  border-left: 1px solid #161616;
}

.side-tabs button {
  width: 20px;
  padding: 4px 0;
  writing-mode: vertical-rl;
  justify-content: flex-start;
  background: #464646;
  border: 1px solid #1c1c1c;
  border-radius: 3px;
}

/* status bar */
.statusbar {
  height: 24px;
  padding: 0 5px;
  display: flex;
  align-items: center;
  gap: 14px;
  background: #3b3b3b;
}

.panels {
  height: 18px;
  margin-left: auto;
  padding: 0 4px;
  background: #4c4c4c;
  border: 1px solid #1c1c1c;
  border-radius: 3px;
}

/* windows taskbar */
.taskbar {
  height: 40px;
  display: flex;
  background: linear-gradient(90deg, #1d3039, #1d2f3a 70%, #182142 90%, #161c3e);
  color: #fff;
}

.start {
  width: 48px;
  justify-content: center;
}

.start svg, .task-search svg {
  width: 18px;
  height: 18px;
}

.task-search {
  width: 344px;
  padding: 0 11px;
  display: flex;
  align-items: center;
  gap: 8px;
  background: #f3f3f3;
  border: 1px solid #d8d8d8;
  color: #1c1c1c;
  font-size: 14px;
}

.apps {
  display: flex;
}

.apps button {
  position: relative;
  width: 49px;
  justify-content: center;
}

.apps svg {
  width: 24px;
  height: 24px;
}

.apps .open::after {
  content: "";
  position: absolute;
  left: 4px;
  right: 4px;
  bottom: 0;
  height: 2px;
  background: #8cc4f0;
}

.apps .current {
  background: #4a5d68;
}

.apps .current::after {
  left: 0;
  right: 0;
}

.tile {
  width: 22px;
  height: 22px;
  border-radius: 4px;
  background: #001e36;
  color: #4db4ff;
  font-size: 12px;
  font-weight: 700;
  line-height: 22px;
  text-align: center;
}

.tile.pr {
  background: #00005b;
  color: #b0a0ff;
}

.badge {
  position: absolute;
  left: 28px;
  top: 18px;
  font-size: 10px;
}

.cvavr {
  color: #e81a22;
  font-weight: 700;
  font-size: 11px;
  line-height: 12px;
  text-align: center;
}

.cvavr i {
  display: block;
  font-size: 14px;
  line-height: 14px;
}

.tray {
  margin-left: auto;
  padding-right: 24px;
  display: flex;
  align-items: center;
  gap: 8px;
}

.tray svg {
  width: 16px;
  height: 16px;
}

.tray .pen {
  margin: 0 6px 0 5px;
}

.lang {
  font-size: 12px;
}

.clock {
  margin-right: 8px;
  display: flex;
  flex-direction: column;
  align-items: center;
  font-size: 11px;
  line-height: 18px;
}

.tray .notice {
  width: 18px;
  height: 18px;
}
```
